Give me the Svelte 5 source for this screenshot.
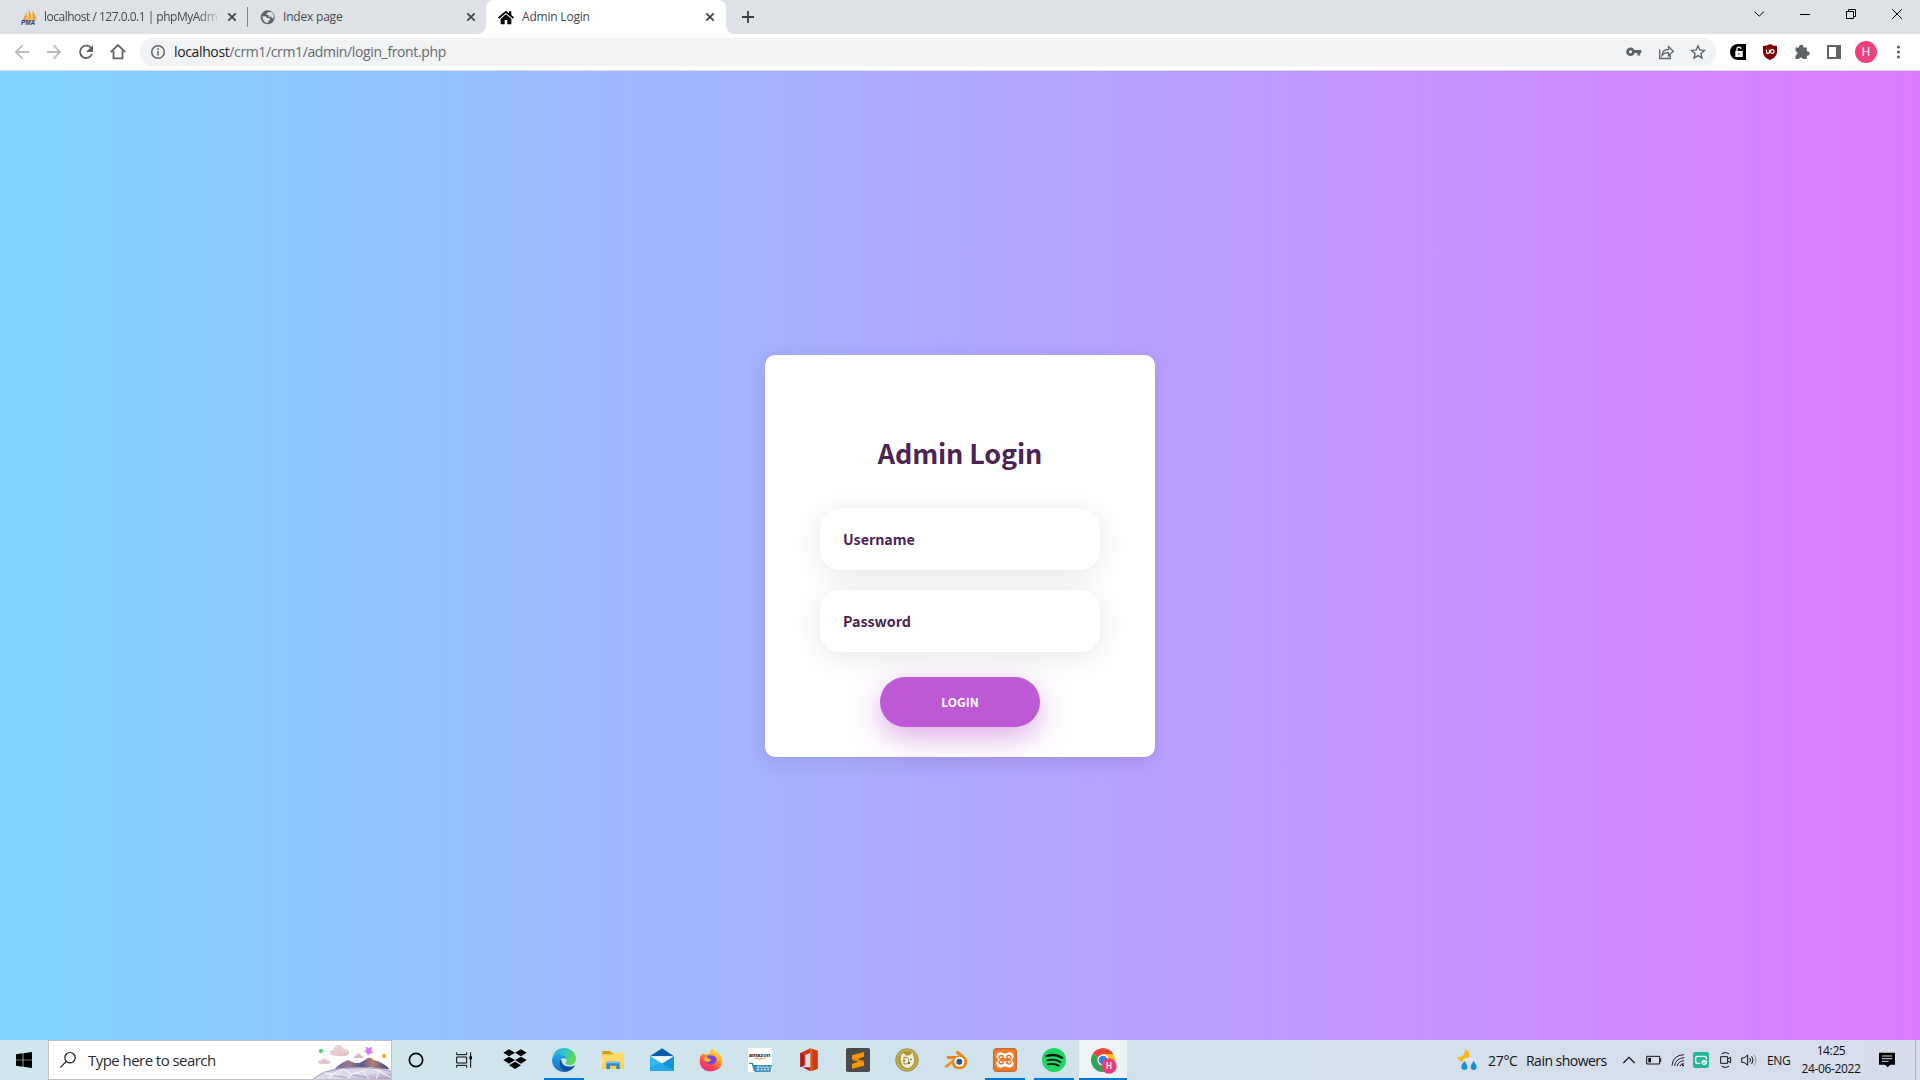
<script>
  const icons = ['dropbox', 'edge', 'folder', 'mail', 'firefox', 'amazon', 'office', 'sublime', 'doge', 'blender', 'xampp', 'spotify', 'chrome'];
  const running = ['edge', 'xampp', 'spotify', 'chrome'];
</script>

{#snippet cross()}
  <svg class="cross" viewBox="0 0 10 10"><path d="M1.3 1.3 8.7 8.7M8.7 1.3 1.3 8.7" /></svg>
{/snippet}

{#snippet app(name)}
  <svg class="app-icon" viewBox="0 0 72 72">
    {#if name === 'dropbox'}
      <path d="M18 4 36 14 18 25 1 14zM54 4 71 14 54 25 36 14zM18 26 36 36 18 47 1 36zM54 26 71 36 54 47 36 36zM36 41 54 52 36 63 18 52z" />
    {:else if name === 'edge'}
      <defs>
        <linearGradient id="e1" x1="0" y1="0" x2="1" y2=".4"><stop offset="0" stop-color="#2aa9dc" /><stop offset=".5" stop-color="#2fc2cf" /><stop offset="1" stop-color="#5bdc50" /></linearGradient>
        <linearGradient id="e2" x1="0" y1="0" x2="0" y2="1"><stop offset="0" stop-color="#1aa2e4" /><stop offset="1" stop-color="#1572cb" /></linearGradient>
      </defs>
      <path fill="url(#e1)" d="M1 32C4 12 18 0 37 0c20 0 35 15 35 32 0 12-9 19-20 19-8 0-13-3-12-7 3-3 5-6 4-10C41 20 12 16 1 32z" />
      <path fill="url(#e2)" d="M0 36C2 24 15 18 27 20c11 2 18 9 17 16-1-4-6-6-11-5-13 3-14 23 0 33 2 2 5 5 11 7C22 76 0 60 0 36z" />
      <path fill="#11509f" d="M25 35c-7 13-1 31 20 36 10-2 18-8 23-16 1-2 0-3-2-2-15 6-34 1-37-12 0-3-1-5-4-6z" />
    {:else if name === 'folder'}
      <path fill="#dc9b10" d="M4 9h23l5 6h32v10H4z" />
      <path fill="#ffd866" d="M4 19h29l5-4h30v48H4z" />
      <path fill="#ffcf50" d="M4 46h64v17H4z" />
      <path fill="#2b88cf" d="M16 41h40v22H46V53H27v10H16z" />
      <path fill="#73c5f5" d="M16 41h40v5H16z" />
    {:else if name === 'mail'}
      <path fill="#0a5ca9" d="M36 1 72 25H0z" />
      <path fill="#f2f6fa" d="M4 25h64L38 48z" />
      <path fill="#35b8ee" d="M0 25 37 47 0 68z" />
      <path fill="#1393de" d="M72 25v43H0z" />
      <path fill="#24a7e8" d="M0 68V58l32-14 40 24z" />
    {:else if name === 'firefox'}
      <defs><linearGradient id="ff" x1=".8" y1="0" x2=".25" y2="1"><stop offset="0" stop-color="#fff044" /><stop offset=".4" stop-color="#ffa329" /><stop offset=".7" stop-color="#ff4a4b" /><stop offset="1" stop-color="#e0218e" /></linearGradient></defs>
      <path fill="url(#ff)" d="M40 1c6 4 11 10 13 16 2-3 1-5 1-7 11 8 17 18 16 30-1 17-15 30-34 30C16 70 2 57 2 38c0-9 2-15 6-21l1 4 5-6 1 5c7-3 11-2 16-1C33 12 35 6 40 1z" />
      <path fill="#7543e5" d="M24 25c4-3 9-4 13-2 5-2 12 1 15 7 3 9-4 20-16 20-10 0-16-7-16-14 3 3 7 4 10 3 3-2 6-3 6-6-5 0-8-2-12-8z" />
      <path fill="#ffbd2f" d="M16 28c6-2 8 3 12 5 4 1 8 1 8 3s-5 3-7 6c-4 0-10-1-13-5z" />
    {:else if name === 'amazon'}
      <path fill="#fff" d="M0 0h72v72H0z" />
      <text x="2" y="27" class="amz">amazon</text>
      <path fill="none" stroke="#f39a1e" stroke-width="3" d="M21 30q15 7 31-1" />
      <path fill="none" stroke="#1c77ad" stroke-width="4" d="M4 46h9l7 24" />
      <path fill="#2880b5" d="M15 51h57l-5 21H22z" />
      <path stroke="#e4f2fa" stroke-width="1.5" d="M19 58h50M21 65h46M27 52l6 19M37 52l6 19M47 52l6 19M57 52l5 19M35 52l-8 19M46 52l-8 19M56 52l-8 19M67 52l-9 19" />
    {:else if name === 'office'}
      <path fill="#d8331c" d="M10 15 40 1v13L25 21v31l-15 6z" />
      <path fill="#a4162a" d="M10 15v43l10-5V19z" />
      <path fill="#ee5010" d="M40 1 62 8v54l-22 8z" />
      <path fill="#ba1b22" d="M16 58h24v12z" />
      <path fill="#d33a16" d="M47 4 62 8v54l-15 6z" />
    {:else if name === 'sublime'}
      <rect width="72" height="72" rx="5" fill="#4b4b4b" />
      <path fill="#ff9800" d="M54 12v14l-20 7 20 6v14L18 62V48l20-7-20-6V22z" />
      <path fill="#e07b00" d="m34 33 20 6v7L18 35v-5z" opacity=".65" />
    {:else if name === 'doge'}
      <circle cx="36" cy="36" r="34" fill="#c4ad4a" stroke="#877a38" stroke-width="2" />
      <circle cx="36" cy="36" r="26" fill="#ab943d" />
      <path fill="#f8efd6" d="m18 20 8-5 7 8 11-1 8-8 5 16c2 16-6 29-19 30-15-1-24-15-20-40z" />
      <path fill="none" stroke="#9a8650" stroke-width="3" d="M27 28v20h6c11 0 12-18 0-20zM23 38h9" />
      <path fill="#4a4330" d="M46 32h4v4h-4zM39 43h6v4h-6z" />
    {:else if name === 'blender'}
      <path fill="#ee8918" d="M37 10q4-3 7 0l20 17c12 11 5 37-17 37-15 0-23-9-23-18L11 58q-9 3-9-4l27-21H12q-7-3-2-9h34L36 16q-2-4 1-6z" />
      <circle cx="46" cy="41" r="15" fill="#fff" />
      <circle cx="46" cy="41" r="9" fill="#25598e" />
    {:else if name === 'xampp'}
      <rect x="2" y="2" width="68" height="68" rx="7" fill="#f17b24" stroke="#b85b2c" stroke-width="3" />
      <path fill="#fff" d="M24 13c5 0 8 4 12 4s7-4 13-4c14 0 17 15 7 23 10 8 7 22-7 23-6 0-9-4-13-4s-7 4-12 4C9 59 5 44 16 36 6 28 9 13 24 13z" />
      <path fill="none" stroke="#ed7425" stroke-width="4.500" stroke-linejoin="round" stroke-linecap="round" d="M30 24q-11-4-12 4 0 4 7 5h22q8-1 7-6-2-7-12-3v22q10 5 12-2 1-6-7-7H25q-8 1-7 6 2 7 12 3z" />
    {:else if name === 'spotify'}
      <circle cx="36" cy="36" r="36" fill="#1ed760" />
      <path fill="none" stroke="#111" stroke-linecap="round" d="M14 24q26-8 46 5" stroke-width="7" />
      <path fill="none" stroke="#111" stroke-linecap="round" d="M16 37q22-6 39 5M18 49q18-4 32 4" stroke-width="5.5" />
    {:else if name === 'chrome'}
      <path fill="#e84336" d="M36 36 5 18A36 36 0 0 1 67 18z" />
      <path fill="#31a352" d="M36 36 39 72A36 36 0 0 1 5 18z" />
      <path fill="#fbc111" d="M36 18h31A36 36 0 0 1 39 72z" />
      <circle cx="36" cy="36" r="17" fill="#fff" />
      <circle cx="36" cy="36" r="13" fill="#377ee9" />
      <circle cx="54" cy="54" r="23" fill="#e93d79" />
      <text x="54" y="63" class="badge">H</text>
    {/if}
  </svg>
{/snippet}

<div class="screen">
  <header class="tabs">
    <div class="tab">
      <svg class="fav" viewBox="0 0 48 48">
        <path fill="#f89c27" d="M5 32 17 9v23zM19 31 25 0l7 31zM34 31 35 4l12 27z" /><path fill="#fbc679" d="M19 31 25 2l-1 29zM35 6l1 25h-3z" />
        <path fill="#dc8b41" d="M3 32h43l-5 4H8z" />
        <text x="0" y="48" class="pma">PMA</text>
      </svg>
      <span class="title fade">localhost / 127.0.0.1 | phpMyAdm</span>
      {@render cross()}
    </div>
    <div class="tab divided">
      <svg class="fav" viewBox="0 0 48 48"><circle cx="23" cy="25" r="21" fill="#5f6368" /><path fill="#dee1e6" d="M7 22h10l6 6h7v5l-5 3v6q-16 1-18-20zM26 9l-6 4v5h6v5h8l2 5h5Q43 14 33 9z" /></svg>
      <span class="title">Index page</span>
      {@render cross()}
    </div>
    <div class="tab active">
      <svg class="fav" viewBox="0 0 48 48"><path d="M24 5 0 25l4 4L24 12l20 17 4-4-8-7V7h-7v6z" /><path d="m24 16 16 14v16H28V33h-8v13H8V30z" /></svg>
      <span class="title">Admin Login</span>
      {@render cross()}
    </div>
    <svg class="plus" viewBox="0 0 12 12"><path d="M6 0v12M0 6h12" /></svg>
    <div class="window">
      <svg viewBox="0 0 46 28"><path d="m18.500 11.500 4.700 4.700 4.700-4.700" /></svg>
      <svg viewBox="0 0 46 28"><path d="M18 14.500h10" /></svg>
      <svg viewBox="0 0 46 28"><path d="M18.500 11.500h7v7h-7zM20.500 11.500v-2h7v7h-2" /></svg>
      <svg viewBox="0 0 46 28"><path d="m18.200 9.200 9.600 9.600M27.800 9.200l-9.600 9.600" /></svg>
    </div>
  </header>

  <nav class="toolbar">
    <svg class="tool pale" viewBox="0 0 32 36"><path d="M23 18H10M16.500 11.300 9.800 18l6.700 6.700" /></svg>
    <svg class="tool pale" viewBox="0 0 32 36"><path d="M9 18h13M15.500 11.300l6.700 6.700-6.700 6.700" /></svg>
    <svg class="tool" viewBox="0 0 32 36"><path d="M21.500 14.500A6.200 6.200 0 1 0 22 20" /><path class="solid" d="M23 11v7h-7z" /></svg>
    <svg class="tool" viewBox="0 0 32 36"><path d="M8.700 18.200 16 11l7.300 7.200M11.500 17v7.300h9V17" /></svg>
    <div class="omnibox">
      <svg class="info" viewBox="0 0 16 16"><circle cx="8" cy="8" r="6.300" /><path d="M8 7v4.500M8 4.300V6" /></svg>
      <span class="url"><b>localhost</b>/crm1/crm1/admin/login_front.php</span>
      <svg class="tool" viewBox="0 0 32 36"><circle cx="12.500" cy="17.700" r="2.900" class="key" /><path class="key" d="M15.500 17.500h7.800M20.800 18v3.500" /></svg>
      <svg class="tool thin" viewBox="0 0 32 36"><path d="M9.700 15.500v9h10.500v-3.500M12 21.500q0-6 6.500-6v-3l4.800 4.700-4.800 4.500v-3Q14 18.500 12 21.500z" /></svg>
      <svg class="tool thin" viewBox="0 0 32 36"><path d="m16 11.800 1.800 4.200 4.700.4-3.600 3.100 1.100 4.600-4-2.500-4 2.500 1.100-4.600-3.600-3.100 4.700-.4z" /></svg>
    </div>
    <svg class="tool ext first" viewBox="0 0 32 36"><path class="black" d="M16 10h8v16h-8a8 8 0 0 1 0-16z" /><path fill="#fff" d="M13.300 17h7.400v6h-7.400z" /><path fill="none" stroke="#fff" stroke-width="1.300" d="M15 17v-1.500a2 2 0 0 1 4-.6" /><path class="black" d="M16.300 19.200h1.400v1.400h-1.400z" /></svg>
    <svg class="tool ext" viewBox="0 0 32 36"><path fill="#800000" d="M16 10q3 2 7 2v6q0 5-7 8-7-3-7-8v-6q4 0 7-2z" /><path d="M12.500 15.500v2.500q0 1.500 1.500 1.500t1.500-1.500v-2.500v2.500" stroke="#fff" fill="none" stroke-width="1.300" /><circle cx="18.200" cy="17.500" r="1.800" stroke="#fff" fill="none" stroke-width="1.200" /></svg>
    <svg class="tool ext" viewBox="0 0 32 36"><path fill="#5f6368" d="M9.500 13.500H13a2.300 2.300 0 1 1 4.500 0h3.300v3.800a2.300 2.300 0 1 1 0 4.400v3.300H17a2.200 2.200 0 0 0-4.200 0H9.500v-3.600a2.300 2.300 0 0 0 0-4.500z" /></svg>
    <svg class="tool ext" viewBox="0 0 32 36"><path d="M10 12h12v12H10z" fill="none" stroke="#5f6368" stroke-width="2" /><path fill="#5f6368" d="M18 12h4v12h-4z" /></svg>
    <span class="profile"><i>H</i></span>
    <svg class="tool ext" viewBox="0 0 32 36"><g fill="#5f6368"><circle cx="16.500" cy="13" r="1.600" /><circle cx="16.500" cy="18" r="1.600" /><circle cx="16.500" cy="23" r="1.600" /></g></svg>
  </nav>

  <main>
    <form class="card">
      <h1>Admin Login</h1>
      <div class="field">Username</div>
      <div class="field">Password</div>
      <button type="button">LOGIN</button>
    </form>
  </main>

  <footer>
    <div class="start"><svg viewBox="0 0 48 48"><path d="m0 7 20-3v19H0zM22 4l26-4v23H22zM0 25h20v19L0 41zM22 25h26v23l-26-4z" /></svg></div>
    <div class="search">
      <svg class="glass" viewBox="0 0 48 48"><circle cx="30" cy="17" r="15.500" /><path d="M19 28 1 46" /></svg>
      <span>Type here to search</span>
      <svg class="scene" viewBox="930 15 243 114">
        <defs>
          <linearGradient id="m1" x1="0" y1="0" x2="1" y2="0"><stop offset="0" stop-color="#5b669f" /><stop offset=".3" stop-color="#a1748c" /><stop offset=".5" stop-color="#54598f" /><stop offset=".7" stop-color="#b97e79" /><stop offset="1" stop-color="#2f457e" /></linearGradient>
          <linearGradient id="m2" x1="0" y1="0" x2="1" y2="1"><stop offset="0" stop-color="#a4a7d5" /><stop offset=".35" stop-color="#dfd4e3" /><stop offset=".6" stop-color="#d9dced" /><stop offset="1" stop-color="#b294b8" /></linearGradient>
          <linearGradient id="c1" x1="0" y1="0" x2="1" y2="1"><stop offset="0" stop-color="#f4e0e0" /><stop offset="1" stop-color="#d9acb2" /></linearGradient>
        </defs>
        <path fill="url(#c1)" d="M995 58c-10-6-5-18 5-17 4-18 27-18 31-1 17-2 22 14 9 19-10 2-35 2-45-1zM957 83c-6-4-2-11 5-9 5-10 17-10 19 0 9-2 13 6 6 10zM1064 66c-5-3-1-9 4-7 3-10 13-9 15 0 6-1 9 5 4 7z" />
        <path fill="url(#m1)" d="M998 105q22-24 36-28 10-8 20 0 14 6 26 3 14-6 22-13 10-5 18 4 34 10 48 28l-30 11z" />
        <path fill="url(#m2)" d="M938 130q35-31 87-34 80-6 148 5v29z" />
        <path fill="none" stroke="#fbf9ff" stroke-width="3" d="m970 109 26 7 31-18 27 16 35-8 21-11 27 10 20-6M996 116l-10 14M1054 114l-9 16M1089 106l18 24M1137 105l-9 25M1027 98l-13 20-17-2M1137 105l35 20" />
        <path fill="none" stroke="#8189bd" stroke-width="2" d="m940 129 30-20 57-12 65-2 43 3 37 8M1000 119l38 5M1058 117l42 6" />
        <circle cx="963" cy="45" r="6.500" fill="#57d46f" /><circle cx="1152" cy="60" r="6.500" fill="#f9b20b" />
        <path fill="#dc76f2" stroke="#dc76f2" stroke-width="2" stroke-linejoin="round" d="m1098 33 8 4 10-3-3 9 5 8-9 1-5 6-3-8-7-4 6-5z" />
      </svg>
    </div>
    <div class="sys"><svg viewBox="0 0 48 48"><circle cx="24" cy="24" r="20" fill="none" stroke="#000" stroke-width="5" /></svg></div>
    <div class="sys"><svg viewBox="0 0 48 48"><path fill="none" stroke="#000" stroke-width="3" d="M2 1v7h30V1M2 47v-7h30v7M2 15h30v18H2zM44 1v46" /><path d="M40 13h8v9h-8z" /></svg></div>
    <div class="apps">
      {#each icons as name}
        <div class="slot" class:running={running.includes(name)} class:focused={name === 'chrome'}>{@render app(name)}</div>
      {/each}
    </div>
    <div class="tray">
      <svg class="weather" viewBox="0 0 66 66"><path fill="#d6e0ec" d="M14 44q-4-12 10-16 12-10 22 1 17 0 18 11-2 8-11 7H20z" /><path fill="#fcb813" d="M24 0q18 10 12 27-6 12-19 12Q4 36 1 23q9 3 16-3 8-8 7-20z" /><path fill="#e3eaf3" d="M17 40q0-13 13-13 9-5 17 2 8 0 12 6-20-4-42 5z" /><path fill="#168fda" d="M22 36q-9 12-9 19 1 8 9 8t9-8q0-7-9-19zM50 36q-9 12-9 19 1 8 9 8t9-8q0-7-9-19z" /></svg>
      <span class="temp">27°C</span>
      <span class="rain">Rain showers</span>
      <svg class="t chev" viewBox="0 0 48 48"><path d="m7 33 17-17 17 17" stroke-width="3.500" /></svg>
      <svg class="t bat" viewBox="0 0 48 48"><path d="M2 13h39v23H2zM44 19v11" /><path d="M7 18h8v13H7z" class="ink" /></svg>
      <svg class="t wifi" viewBox="0 0 48 48"><path d="M6 41Q8 10 42 8M14 42q2-23 29-25M22 42q2-14 20-16M30 43q1-7 11-9" stroke-width="2.800" /><circle cx="39" cy="40" r="3" class="ink" /></svg>
      <svg class="t" viewBox="0 0 48 48"><rect width="48" height="48" rx="7" fill="#27b796" stroke="none" /><path d="M22 34H13q-5 0-5-5V18q0-5 5-5h21q6 0 6 6v3" stroke="#fff" stroke-width="4" /><path fill="#fff" stroke="none" d="M34 23q4 3 9 3 0 11-9 14-9-3-9-14 5 0 9-3z" /><path d="m29 31 4 4 6-6" stroke="#27b796" /></svg>
      <svg class="t cam" viewBox="0 0 48 48"><path d="M8 14h21v20H8zM29 21l9-5v16l-9-5M11 5q11-7 22 0M11 43q11 7 22 0" /></svg>
      <svg class="t snd" viewBox="0 0 48 48"><path d="M2 18h7l11-9v31L9 31H2zM26 18q5 6 0 13M32 13q8 11 0 23" /><path d="M39 8q12 16 0 33" stroke="#8e97a4" /></svg>
      <span class="lang">ENG</span>
      <div class="clock"><span>14:25</span><span>24-06-2022</span></div>
      <svg class="t note" viewBox="0 0 48 48"><path class="ink" d="M0 2h48v36H34L26 46l-8-8H0z" /><path stroke="#d5dded" d="M9 12h30M9 20h30M9 28h20" /></svg>
    </div>
  </footer>
</div>

<style>
  :global(body) { margin: 0; overflow: hidden; }
  .screen { width: 1920px; height: 1080px; display: flex; flex-direction: column; font-family: 'Open Sans', 'Noto Sans', sans-serif; overflow: hidden; }
  svg { display: block; flex: none; overflow: visible; }

  .tabs { height: 34px; background: #dee1e6; display: flex; padding-left: 8px; box-sizing: border-box; flex: none; }
  .tab { width: 239px; height: 34px; padding: 0 10px 0 13px; box-sizing: border-box; display: flex; align-items: center; position: relative; flex: none; }
  .tab.divided::before { content: ''; width: 1px; height: 20px; background: #808387; position: absolute; left: 0; top: 7px; }
  .tab.active { width: 240px; padding: 0 11px 0 12px; background: #fff; border-radius: 8px 8px 0 0; }
  .tab.active::before, .tab.active::after { content: ''; position: absolute; bottom: 0; width: 8px; height: 8px; }
  .tab.active::before { left: -8px; background: radial-gradient(circle at 0 0, transparent 7.5px, #fff 8px); }
  .tab.active::after { right: -8px; background: radial-gradient(circle at 100% 0, transparent 7.5px, #fff 8px); }
  .fav { width: 16px; height: 16px; margin-right: 7px; }
  .active .fav { margin-right: 8px; }
  .title { flex: 1; font-size: 12px; letter-spacing: -0.2px; color: #45494d; white-space: nowrap; line-height: 20px; }
  .fade { letter-spacing: -0.5px; margin-right: 7px; -webkit-mask-image: linear-gradient(90deg, #000 88%, transparent); mask-image: linear-gradient(90deg, #000 88%, transparent); }
  .cross { width: 10px; height: 10px; stroke: #3c4043; stroke-width: 1.7; }
  .plus { width: 12px; height: 12px; margin: 11px 0 0 16px; stroke: #3c4043; stroke-width: 1.8; }
  .window { margin-left: auto; display: flex; }
  .window svg { width: 46px; height: 28px; fill: none; stroke: #000; stroke-width: 1; }
  .pma { font: italic bold 19px 'Liberation Sans', sans-serif; fill: #343569; }

  .toolbar { height: 36px; background: #fff; border-bottom: 1px solid #d9dadd; display: flex; align-items: center; padding: 0 6px; flex: none; }
  .tool { width: 32px; height: 36px; fill: none; stroke: #5f6368; stroke-width: 1.8; }
  .pale { stroke: #b9bbbe; }
  .thin { stroke-width: 1.3; }
  .tool .solid { fill: #5f6368; stroke: none; }
  .tool .key { stroke-width: 2.8; }
  .ext { stroke: none; }
  .black { fill: #000; }
  .first { margin-left: 6px; }
  .omnibox { height: 28px; border-radius: 14px; background: #f1f3f4; margin-left: 6px; flex: 1; display: flex; align-items: center; padding: 0 2px 0 10px; }
  .info { width: 16px; height: 16px; fill: none; stroke: #5f6368; stroke-width: 1.5; }
  .url { flex: 1; margin-left: 8px; font-size: 14px; letter-spacing: -0.37px; color: #66696d; line-height: 20px; }
  .url b { font-weight: 400; color: #202124; }
  .profile { width: 32px; display: flex; justify-content: center; }
  .profile i { width: 22px; height: 22px; border-radius: 50%; background: #ec407a; color: #fff; font: 12px/22px Roboto, sans-serif; text-align: center; }

  main { flex: 1; display: flex; justify-content: center; align-items: center; background: linear-gradient(90deg, #7fd5ff, #afa8ff 50%, #dc7bff); }
  .card { width: 390px; height: 402px; box-sizing: border-box; padding: 78px 55px 0; background: #fff; border-radius: 10px; box-shadow: 0 5px 20px rgba(0, 0, 0, 0.1); font-family: 'Noto Sans CJK SC', sans-serif; display: flex; flex-direction: column; align-items: center; }
  h1 { margin: 0 0 35px; font-size: 27px; letter-spacing: -0.15px; line-height: 40px; font-weight: 700; color: #4b2354; white-space: nowrap; }
  .field { width: 280px; height: 62px; box-sizing: border-box; padding: 0 23px; margin-bottom: 20px; border-radius: 20px; background: #fff; box-shadow: 0 5px 30px rgba(0, 0, 0, 0.1); color: #4b2354; font-weight: 700; font-size: 14.3px; line-height: 62px; }
  .card button { width: 160px; height: 50px; margin: 5px 0 0; padding: 0; border: 0; border-radius: 25px; background: #bd59d4; color: #fff; font: 700 12px/49px 'Noto Sans CJK SC', sans-serif; box-shadow: 0 10px 30px rgba(189, 89, 212, 0.5); }

  footer { height: 40px; display: flex; flex: none; background: linear-gradient(90deg, #cfe6ee, #d0e3ec 50%, #d7dcec); }
  .start { width: 48px; display: flex; align-items: center; justify-content: center; }
  .start svg { width: 16px; height: 16px; }
  .search { width: 344px; height: 40px; box-sizing: border-box; border: 1px solid #c3c4c8; background: #fff; display: flex; align-items: center; padding-left: 11px; }
  .glass { width: 16px; height: 16px; fill: none; stroke: #111; stroke-width: 3.5; }
  .search span { margin-left: 12px; flex: 1; font-size: 15px; letter-spacing: -0.55px; color: #2b2b2b; white-space: nowrap; }
  .scene { width: 81px; height: 38px; overflow: hidden; }
  .sys { width: 48px; display: flex; align-items: center; justify-content: center; }
  .sys svg { width: 16px; height: 16px; }
  .apps { display: flex; gap: 1px; margin-left: 3px; }
  .slot { width: 48px; height: 40px; box-sizing: border-box; display: flex; justify-content: center; padding-top: 8px; position: relative; }
  .app-icon { width: 24px; height: 24px; }
  .running::after { content: ''; height: 2px; background: #0078d7; position: absolute; bottom: 0; left: 4px; right: 4px; }
  .focused { background: #edf3f7; }
  .focused::after { left: 0; right: 0; }
  .amz { font: bold 17.5px 'Liberation Sans', sans-serif; fill: #111; }
  .badge { font: 500 25px Roboto, sans-serif; fill: #fff; text-anchor: middle; }

  .tray { margin-left: auto; width: 463px; display: flex; align-items: center; color: #111; white-space: nowrap; }
  .weather { width: 22px; height: 22px; }
  .temp { width: 38px; margin-left: 9px; font-size: 14px; letter-spacing: -0.3px; }
  .rain { width: 95px; font-size: 14px; letter-spacing: -0.52px; }
  .t { width: 16px; height: 16px; fill: none; stroke: #111; stroke-width: 3; }
  .ink { fill: #000; stroke: none; }
  .bat { margin-left: 9px; }
  .wifi { margin: 0 7px 0 8px; }
  .cam { margin-left: 9px; }
  .snd { margin-left: 7px; }
  .lang { width: 24px; margin-left: 10px; font-size: 12px; letter-spacing: -0.3px; }
  .clock { width: 80px; display: flex; flex-direction: column; align-items: center; font-size: 12px; line-height: 18px; letter-spacing: -0.38px; }
  .note { margin-left: 8px; }
  .tray::after { content: ''; width: 1px; height: 40px; background: #a9b3c3; margin-left: 20px; }
</style>
